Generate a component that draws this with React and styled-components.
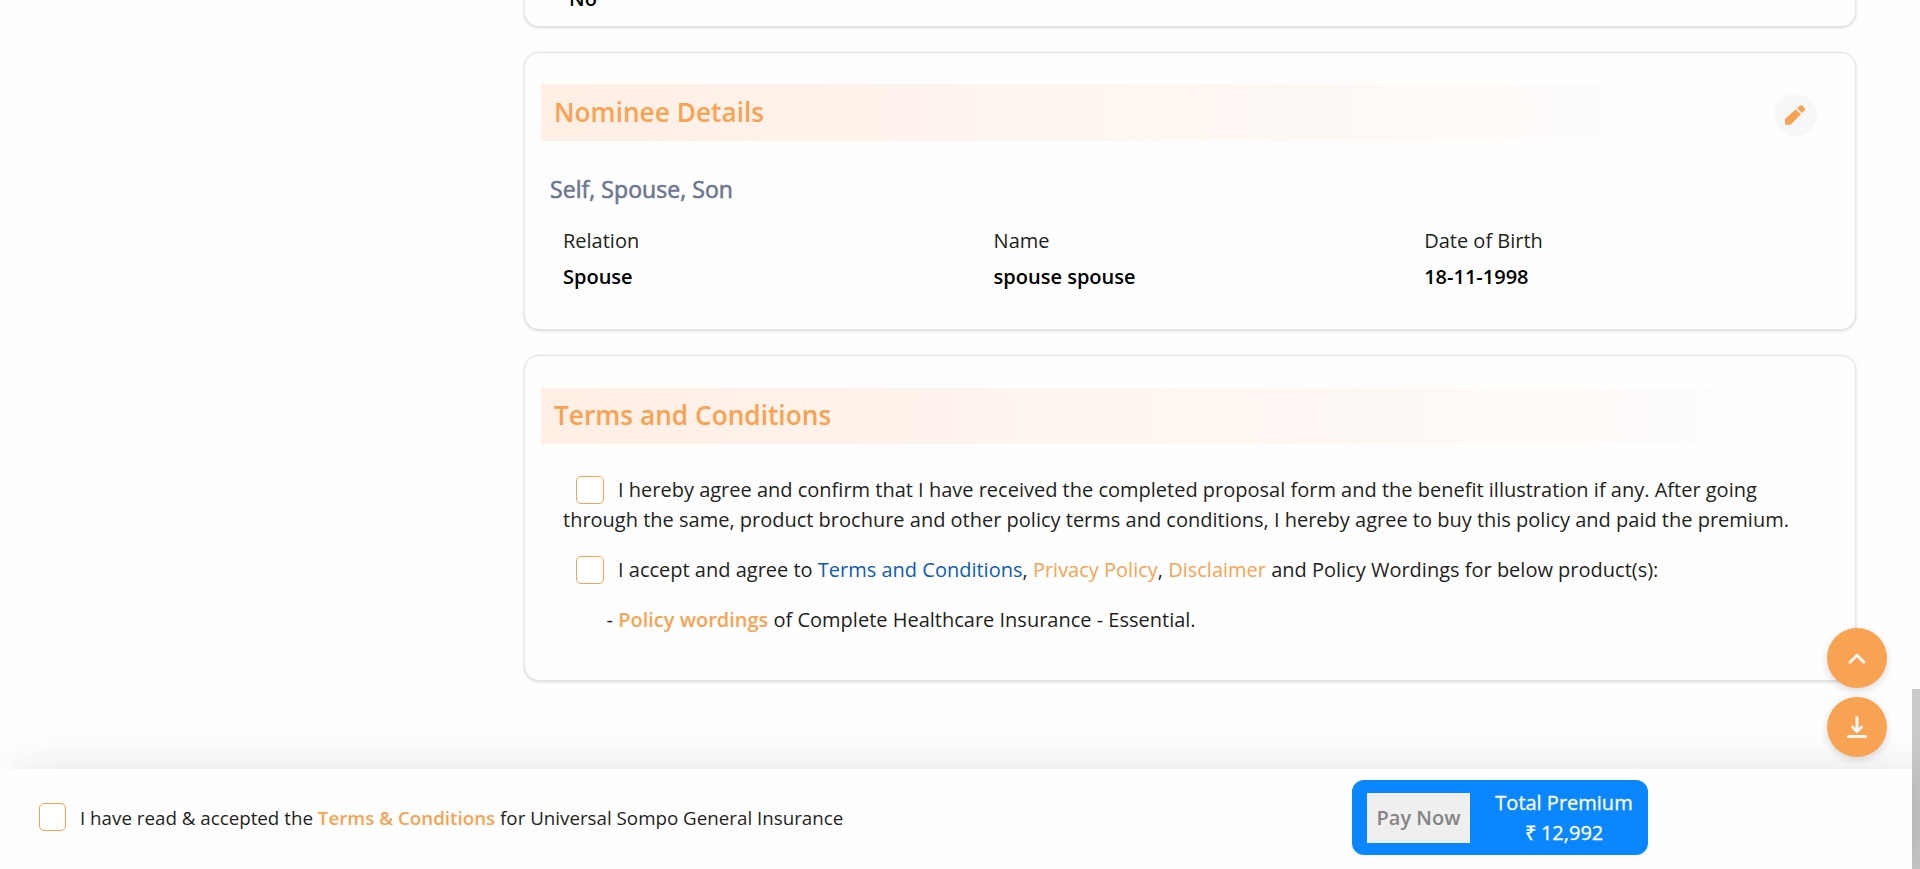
import React from "react";
import styled, { createGlobalStyle } from "styled-components";

const ORANGE = "#f8a252";

const GlobalStyle = createGlobalStyle`
  * { box-sizing: border-box; }
  html, body { margin: 0; padding: 0; overflow: hidden; background: #fefefe; }
  body { font-family: "Open Sans", sans-serif; font-size: 18px; color: #1e1f21; }
  p, h2, h3, dl, dt, dd { margin: 0; padding: 0; }
`;

const Page = styled.div`
  display: flex;
  height: 869px;
  overflow: hidden;
`;

const Main = styled.div`
  flex: 1;
  display: flex;
  flex-direction: column;
  min-width: 0;
`;

const Content = styled.main`
  flex: 0 0 769px;
  padding: 0 56px 0 524px;
  display: flex;
  flex-direction: column;
  gap: 25px;
  overflow: hidden;
`;

const Card = styled.section`
  flex: none;
  height: ${(p) => p.$height}px;
  padding: ${(p) => p.$top || 31}px 16px 0;
  border: 1px solid #e3e4e8;
  border-radius: 15px;
  background: #fefefe;
  box-shadow: 0 1px 3px rgba(0, 0, 0, 0.16);
`;

const CutCard = styled(Card)`
  border-top: 0;
  border-radius: 0 0 15px 15px;
  padding: 0 44px;
`;

const CutValue = styled.p`
  margin-top: -16px;
  font-size: 20px;
  line-height: 30px;
  font-weight: 600;
  color: #000;
`;

const CardHead = styled.header`
  display: flex;
  justify-content: space-between;
  height: 57px;
`;

const Title = styled.h2`
  width: ${(p) => p.$width};
  height: ${(p) => p.$height}px;
  padding-left: 13px;
  background: linear-gradient(90deg, #ffefe5, #fefefe);
  color: ${ORANGE};
  font-size: 26.25px;
  font-weight: 600;
  line-height: ${(p) => p.$height - 1}px;
`;

const EditButton = styled.button`
  display: flex;
  align-items: center;
  justify-content: center;
  width: 43px;
  height: 42px;
  margin: 10px 22px 0 0;
  padding: 0 1px 0 0;
  border: 0;
  border-radius: 50%;
  background: #f5f7f9;
  color: ${ORANGE};
`;

const Members = styled.h3`
  margin: 31px 0 0 9px;
  color: #6b7790;
  font-size: 23px;
  line-height: 34px;
  font-weight: 400;
  letter-spacing: 0.06px;
  -webkit-text-stroke: 0.6px #6b7790;
`;

const Fields = styled.dl`
  display: grid;
  grid-template-columns: repeat(3, 430.6px);
  margin: 17px 0 0 22px;
`;

const Label = styled.dt`
  font-size: 20px;
  line-height: 36px;
`;

const Value = styled.dd`
  font-size: 20px;
  line-height: 36px;
  font-weight: 600;
  color: #000;
`;

const Terms = styled.div`
  display: flex;
  flex-direction: column;
  gap: 20px;
  margin: 30px 22px 0;
  font-size: 20px;
  line-height: 30px;
  white-space: nowrap;
`;

const Clause = styled.p`
  padding-left: ${(p) => p.$indent || 0}px;
`;

const Checkbox = styled.span`
  display: inline-block;
  flex: none;
  width: ${(p) => p.$width || 28}px;
  height: 28px;
  margin: ${(p) => p.$margin || "0"};
  vertical-align: -7px;
  border: 1px solid ${ORANGE};
  border-radius: 5px;
  background: #fff;
`;

const Link = styled.a`
  color: ${(p) => (p.$blue ? "#0d5cb8" : ORANGE)};
  font-weight: ${(p) => (p.$bold ? 600 : 400)};
`;

const Footer = styled.footer`
  position: relative;
  flex: 0 0 100px;
  display: flex;
  align-items: flex-start;
  justify-content: space-between;
  padding: 11px 264px 0 39px;
  background: #fefefe;
  box-shadow: 15px 0 40px rgba(62, 36, 45, 0.12);
`;

const Consent = styled.div`
  display: flex;
  align-items: center;
  gap: 14px;
  height: 28px;
  margin-top: 23px;
  font-size: 18.76px;
  white-space: pre;
`;

const ConsentText = styled.span`
  padding-top: 1px;
`;

const PayPanel = styled.div`
  display: flex;
  align-items: center;
  width: 296px;
  height: 75px;
  padding: 0 15px;
  border-radius: 12px;
  background: #0a87ff;
`;

const PayButton = styled.button`
  width: 103px;
  height: 50px;
  padding: 0;
  border: 0;
  background: #efefef;
  color: #848484;
  font: 600 20px/50px "Open Sans", sans-serif;
`;

const Premium = styled.div`
  flex: 1;
  margin-left: 25px;
  color: #fff;
  font-size: 20px;
  -webkit-text-stroke: 0.3px #fff;
  line-height: 30px;
  text-align: center;
  white-space: nowrap;
`;

const FabStack = styled.div`
  position: absolute;
  right: 33px;
  top: 628px;
  z-index: 2;
  display: flex;
  flex-direction: column;
  gap: 9px;
`;

const Fab = styled.button`
  display: flex;
  align-items: center;
  justify-content: center;
  width: 60px;
  height: 60px;
  padding: 0;
  border: 0;
  border-radius: 50%;
  background: #f8a352;
  box-shadow: 0 3px 8px rgba(0, 0, 0, 0.14);

  svg {
    fill: none;
    stroke: #f5f5f5;
    stroke-width: 3;
    stroke-linecap: round;
    stroke-linejoin: round;
  }
`;

const ScrollTrack = styled.div`
  flex: 0 0 8px;
  display: flex;
  align-items: flex-end;
`;

const ScrollThumb = styled.div`
  width: 8px;
  height: 180px;
  background: #cacaca;
`;

const nominee = [
  ["Relation", "Spouse"],
  ["Name", "spouse spouse"],
  ["Date of Birth", "18-11-1998"],
];

const PencilIcon = () => (
  <svg width="20" height="20" viewBox="0 0 20 20" fill="currentColor">
    <path d="M0 14.6a2 2 0 0 1 .5-1.2L10.8 4.3l5 5L6 19.3a1.5 1.5 0 0 1-1 .4H.8a.8.8 0 0 1-.8-.8Z" />
    <path d="m12.1 3.2 2.2-2.2a2.4 2.4 0 0 1 3.3 0l1.6 1.6a2.4 2.4 0 0 1 0 3.3l-2.2 2.2Z" />
  </svg>
);

export default function App() {
  return (
    <Page>
      <GlobalStyle />
      <Main>
        <Content>
          <CutCard $height={27}>
            <CutValue>No</CutValue>
          </CutCard>
          <Card $height={278}>
            <CardHead>
              <Title $width="1190px" $height={57}>Nominee Details</Title>
              <EditButton aria-label="Edit nominee"><PencilIcon /></EditButton>
            </CardHead>
            <Members>Self, Spouse, Son</Members>
            <Fields>
              {nominee.map(([label, value]) => (
                <div key={label}>
                  <Label>{label}</Label>
                  <Value>{value}</Value>
                </div>
              ))}
            </Fields>
          </Card>
          <Card $height={326} $top={32}>
            <CardHead>
              <Title $width="100%" $height={56}>Terms and Conditions</Title>
            </CardHead>
            <Terms>
              <Clause>
                <Checkbox $margin="0 14px 0 13px" />
                I hereby agree and confirm that I have received the completed proposal form and the benefit illustration if any. After going
                <br />
                through the same, product brochure and other policy terms and conditions, I hereby agree to buy this policy and paid the premium.
              </Clause>
              <Clause>
                <Checkbox $margin="0 14px 0 13px" />
                I accept and agree to <Link $blue>Terms and Conditions</Link>, <Link>Privacy Policy</Link>, <Link>Disclaimer</Link> and Policy Wordings for below product(s):
              </Clause>
              <Clause $indent={43.5}>
                - <Link $bold>Policy wordings</Link> of Complete Healthcare Insurance - Essential.
              </Clause>
            </Terms>
          </Card>
        </Content>
        <Footer>
          <Consent>
            <Checkbox $width={27} />
            <ConsentText>I have read &amp; accepted the <Link $bold>Terms &amp; Conditions</Link> for Universal Sompo General Insurance</ConsentText>
          </Consent>
          <PayPanel>
            <PayButton disabled>Pay Now</PayButton>
            <Premium>
              Total Premium
              <br />₹ 12,992
            </Premium>
          </PayPanel>
        </Footer>
      </Main>
      <ScrollTrack>
        <ScrollThumb />
      </ScrollTrack>
      <FabStack>
        <Fab aria-label="Back to top">
          <svg width="20" height="14" viewBox="0 0 20 14"><path d="M3 11.2 10 4.2l7 7" /></svg>
        </Fab>
        <Fab aria-label="Download">
          <svg width="22" height="24" viewBox="0 0 22 24"><path d="M11 2.5v13M6.5 12l4.5 4.5 4.5-4.5M2.5 21.5h17" /></svg>
        </Fab>
      </FabStack>
    </Page>
  );
}
